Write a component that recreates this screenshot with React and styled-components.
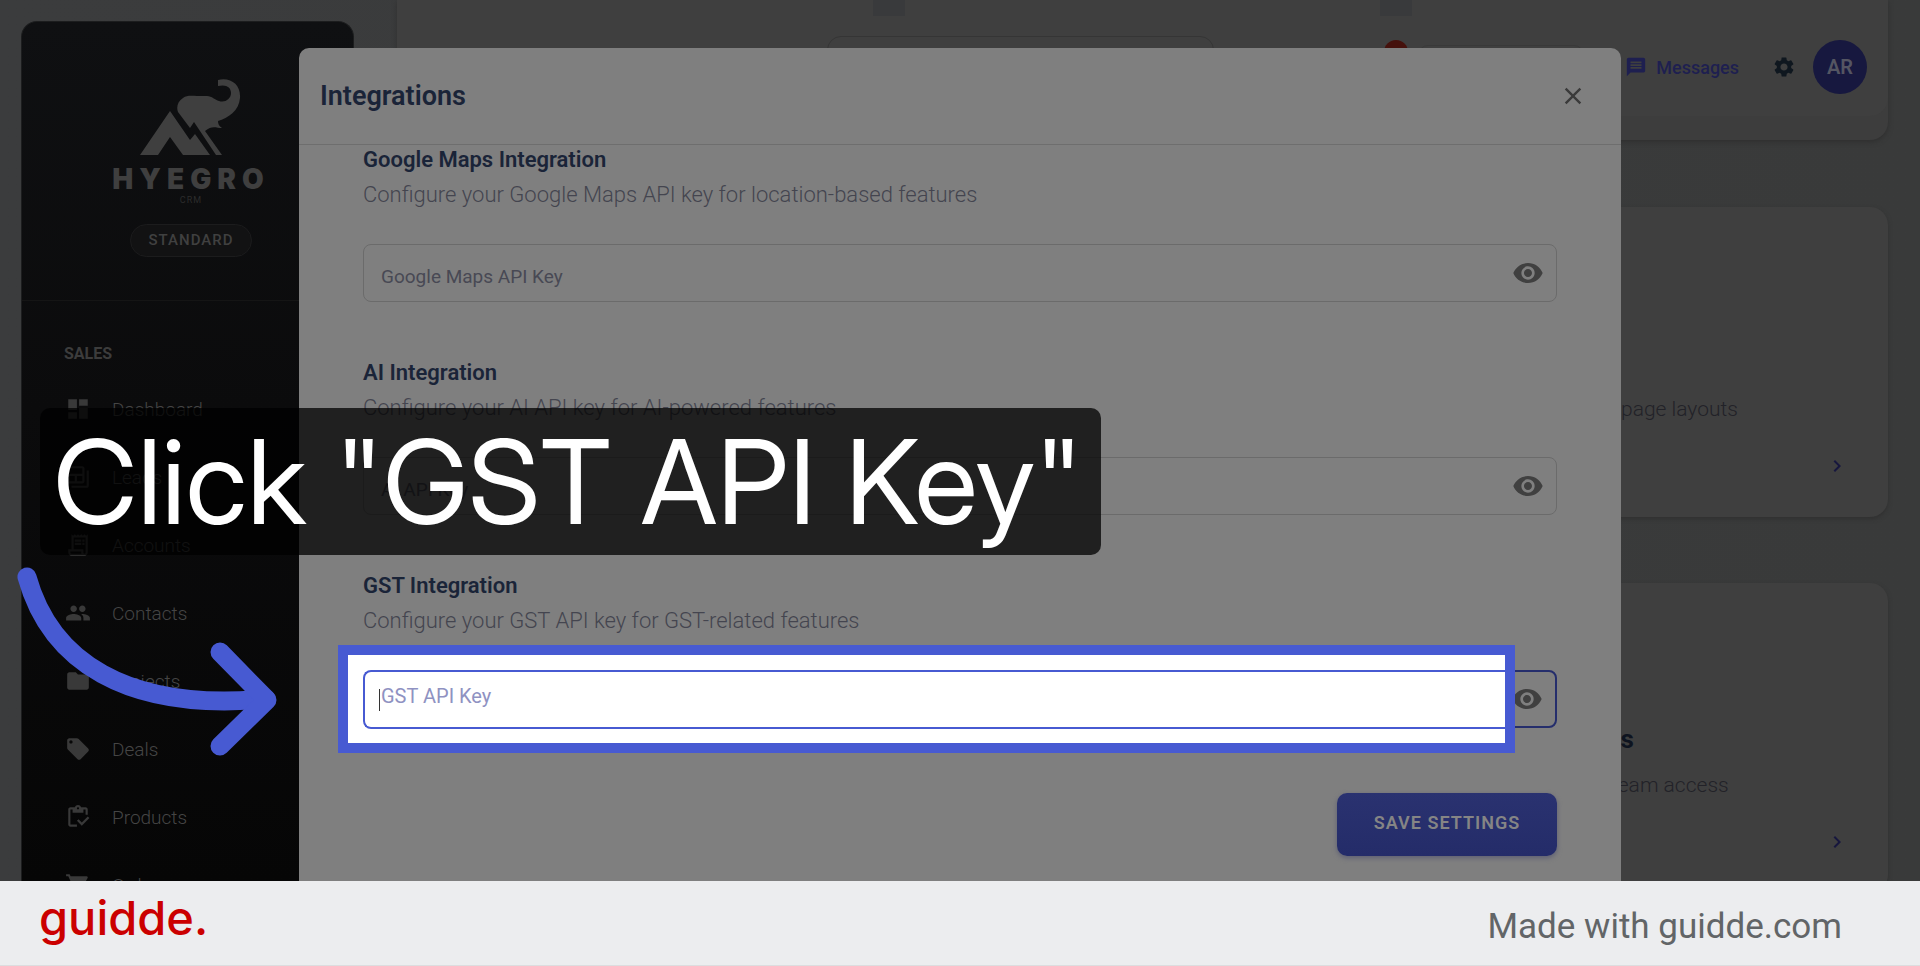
import styled, { createGlobalStyle } from "styled-components";
import { useState } from "react";
import {
  MdBackupTable,
  MdChevronRight,
  MdClose,
  MdDashboard,
  MdFolder,
  MdLocalOffer,
  MdMessage,
  MdOutlineInventory,
  MdOutlineReceiptLong,
  MdPeople,
  MdSettings,
  MdShoppingCart,
  MdVisibility,
} from "react-icons/md";

const GlobalStyle = createGlobalStyle`
  * {
    box-sizing: border-box;
  }
  body {
    margin: 0;
    font-family: Roboto, sans-serif;
    background: #393a3a;
  }
  button {
    font-family: inherit;
    border: none;
    padding: 0;
    background: none;
    cursor: pointer;
  }
`;

const Layout = styled.div`
  display: grid;
  grid-template-rows: minmax(0, 1fr) auto;
  height: 100vh;
  overflow: hidden;
`;

const Stage = styled.main`
  position: relative;
  display: grid;
  grid-template: minmax(0, 1fr) / minmax(0, 1fr);
  overflow: hidden;
`;

/* page behind the dialog */

const Page = styled.div`
  grid-area: 1 / 1;
  display: flex;
  gap: 43px;
  padding: 0 32px 0 21px;
  overflow: hidden;
  background: linear-gradient(90deg, #3b3c3d, #393a3a);
`;

const Sidebar = styled.aside`
  flex: 0 0 333px;
  margin-top: 21px;
  border-radius: 16px 16px 0 0;
  border: 1px solid #1c1d1e;
  border-bottom: none;
  background: linear-gradient(180deg, #0f1012, #0b0b0c 45%, #060606);
  overflow: hidden;
`;

const Brand = styled.div`
  display: flex;
  flex-direction: column;
  align-items: center;
  height: 279px;
  padding: 56px 0 0 7px;
  border-bottom: 1px solid #151515;
`;

const BrandName = styled.div`
  margin-top: 10px;
  font-family: Inter, sans-serif;
  font-size: 28px;
  font-weight: 900;
  line-height: 26px;
  letter-spacing: 6px;
  color: #3f3f3f;
`;

const BrandSub = styled.div`
  margin-top: 2px;
  font-size: 9px;
  line-height: 12px;
  letter-spacing: 1px;
  color: #2c2c2c;
`;

const Plan = styled.div`
  margin-top: 18px;
  padding: 0 18px;
  border: 1px solid #1c1c1d;
  border-radius: 17px;
  background: #121213;
  font-size: 15px;
  font-weight: 500;
  line-height: 31px;
  letter-spacing: 1px;
  color: #404040;
`;

const NavTitle = styled.h2`
  margin: 43px 0 11px 42px;
  font-size: 16px;
  font-weight: 700;
  line-height: 20px;
  color: #3c3c3c;
`;

const NavItem = styled.a`
  display: flex;
  align-items: center;
  gap: 21px;
  height: 68px;
  padding-left: 43px;
  font-size: 19px;
  font-weight: 300;
  text-decoration: none;
  color: #454545;

  svg {
    width: 26px;
    height: 26px;
    color: #393939;
  }
`;

const Content = styled.div`
  flex: 1;
  min-width: 0;
  display: flex;
  flex-direction: column;
`;

const TopPanel = styled.header`
  flex: none;
  height: 140px;
  border-radius: 0 0 18px 18px;
  background: #3d3d3d;
  box-shadow: 0 2px 5px #2f2f2f;
`;

const TabStrip = styled.div`
  display: flex;
  justify-content: flex-end;
  gap: 475px;
  height: 18px;
  padding-right: 476px;
  background: #3f3f3f;
`;

const Tab = styled.span`
  width: 32px;
  height: 16px;
  background: #393a3c;
`;

const Toolbar = styled.div`
  display: flex;
  align-items: center;
  justify-content: flex-end;
  height: 98px;
  padding-right: 21px;
  border-radius: 0 0 18px 18px;
  background: #3f3f3f;
`;

const Search = styled.input`
  width: 387px;
  height: 62px;
  margin-right: 148px;
  border: 1px solid #353535;
  border-radius: 14px;
  background: transparent;
`;

const Bell = styled.button`
  position: relative;
  width: 46px;
  height: 46px;
  margin-right: 10px;
`;

const BellBadge = styled.span`
  position: absolute;
  top: -4px;
  right: 0;
  width: 24px;
  height: 24px;
  border-radius: 50%;
  background: #45110c;
`;

const QuickBox = styled.div`
  width: 166px;
  height: 44px;
  margin-right: 41px;
  border: 1px solid #393939;
  border-radius: 10px;
`;

const MessagesLink = styled.a`
  display: flex;
  align-items: center;
  gap: 9px;
  margin-right: 33px;
  font-size: 18px;
  font-weight: 500;
  text-decoration: none;
  color: #1e1f50;

  svg {
    width: 22px;
    height: 22px;
  }
`;

const GearButton = styled.button`
  display: flex;
  margin-right: 17px;
  color: #0f171f;

  svg {
    width: 24px;
    height: 24px;
  }
`;

const Avatar = styled.button`
  width: 54px;
  height: 54px;
  border-radius: 50%;
  background: #17183f;
  font-size: 20px;
  font-weight: 600;
  color: #545562;
`;

const CardList = styled.section`
  display: flex;
  flex-direction: column;
  align-items: flex-end;
  gap: 66px;
  padding-top: 67px;
`;

const Card = styled.article`
  width: 475px;
  height: 310px;
  padding: 143px 39px 39px ${(props) => props.$inset};
  border-radius: 18px;
  background: #3f3f3f;
  box-shadow: 0 2px 4px #303030;
`;

const CardTitle = styled.h3`
  height: 26px;
  margin: 0 0 20px;
  font-size: 26px;
  font-weight: 700;
  line-height: 26px;
  color: #0e1420;
`;

const CardText = styled.p`
  margin: 0;
  font-size: 21px;
  font-weight: 300;
  line-height: 26px;
  color: #222228;
`;

const CardLink = styled.a`
  display: flex;
  justify-content: flex-end;
  margin-top: 32px;
  color: #17173e;
`;

/* integrations dialog */

const ModalLayer = styled.div`
  grid-area: 1 / 1;
  display: flex;
  justify-content: center;
  padding-top: 48px;
  z-index: 1;
`;

const Modal = styled.section`
  display: flex;
  flex-direction: column;
  width: 90%;
  max-width: 1322px;
  border-radius: 10px 10px 0 0;
  background: #7f7f7f;
`;

const ModalHeader = styled.div`
  display: flex;
  align-items: center;
  justify-content: space-between;
  height: 97px;
  padding: 0 34px 0 21px;
  border-bottom: 1px solid #6e6e6e;
`;

const ModalTitle = styled.h1`
  margin: 0;
  font-size: 27px;
  font-weight: 600;
  color: #1a2438;
`;

const CloseButton = styled.button`
  display: flex;
  color: #3a3a3a;

  svg {
    width: 28px;
    height: 28px;
  }
`;

const ModalBody = styled.form`
  display: flex;
  flex-direction: column;
  gap: 56px;
  padding: 0 64px;
`;

const SectionTitle = styled.h2`
  margin: 0;
  font-size: 22px;
  font-weight: 600;
  line-height: 29px;
  color: #1a2438;
`;

const SectionText = styled.p`
  margin: 8px 0 36px;
  font-size: 22px;
  font-weight: 300;
  line-height: 26px;
  color: #44454f;
`;

const Field = styled.div`
  position: relative;
  display: flex;
  align-items: center;
  height: 58px;
  padding-right: 12px;
  border: ${(props) => (props.$focused ? "2px solid #252e6c" : "1px solid #6b6b6b")};
  border-radius: 8px;
`;

const FieldInput = styled.input`
  flex: 1;
  min-width: 0;
  height: 100%;
  padding: 0 18px;
  border: none;
  outline: none;
  background: transparent;
  font-family: inherit;
  font-size: 19px;
`;

const FieldLabel = styled.label`
  position: absolute;
  left: ${(props) => (props.$focused ? "16px" : "17px")};
  top: ${(props) => (props.$focused ? "12px" : "20px")};
  font-size: ${(props) => (props.$focused ? "20px" : "19px")};
  line-height: 24px;
  color: ${(props) => (props.$focused ? "#8f92c2" : "#484954")};
  pointer-events: none;
`;

const EyeButton = styled.button`
  display: flex;
  margin-left: auto;
  color: #404040;

  svg {
    width: 32px;
    height: 32px;
  }
`;

const Spotlight = styled.div`
  position: absolute;
  top: -27px;
  right: 40px;
  bottom: -27px;
  left: -27px;
  padding: 15px 0 15px 15px;
  border: 10px solid #475ad2;
  background: #fff;
  overflow: hidden;
`;

const SpotField = styled.div`
  position: relative;
  display: flex;
  height: 59px;
  border: 2px solid #475ad2;
  border-right: none;
  border-radius: 8px 0 0 8px;
`;

const Caret = styled.span`
  position: absolute;
  top: 17px;
  left: 14px;
  width: 1px;
  height: 22px;
  background: #333;
`;

const Actions = styled.div`
  display: flex;
  justify-content: flex-end;
  padding-top: 9px;
`;

const SaveButton = styled.button`
  width: 220px;
  height: 63px;
  padding-bottom: 4px;
  border-radius: 10px;
  background: linear-gradient(180deg, #2a3270, #242c69);
  box-shadow: 0 2px 5px #5d5f74;
  font-size: 18px;
  font-weight: 600;
  letter-spacing: 1px;
  color: #858585;
`;

/* guide step drawn over everything */

const Caption = styled.p`
  position: absolute;
  top: 408px;
  left: 40px;
  z-index: 2;
  margin: 0;
  padding: 0 19px 0 13px;
  border-radius: 10px;
  background: rgba(0, 0, 0, 0.75);
  font-family: "Inter Display", Inter, sans-serif;
  font-size: 117px;
  font-variation-settings: "opsz" 32;
  line-height: 147px;
  white-space: nowrap;
  color: #fff;
`;

const Arrow = styled.svg`
  position: absolute;
  top: 560px;
  left: 10px;
  z-index: 3;
  width: 280px;
  height: 210px;
`;

const Footer = styled.footer`
  display: flex;
  align-items: center;
  justify-content: space-between;
  height: 85px;
  padding: 0 78px 0 39px;
  border-bottom: 1px solid #dcdddf;
  background: #ecedef;
`;

const Wordmark = styled.a`
  padding-bottom: 10px;
  font-family: Inter, sans-serif;
  font-size: 47px;
  font-weight: 500;
  line-height: 56px;
  text-decoration: none;
  color: #cb0000;
`;

const MadeWith = styled.span`
  padding-top: 8px;
  font-size: 35px;
  line-height: 44px;
  color: #626567;
`;

const navItems = [
  { label: "Dashboard", Icon: MdDashboard },
  { label: "Leads", Icon: MdBackupTable },
  { label: "Accounts", Icon: MdOutlineReceiptLong },
  { label: "Contacts", Icon: MdPeople },
  { label: "Projects", Icon: MdFolder },
  { label: "Deals", Icon: MdLocalOffer },
  { label: "Products", Icon: MdOutlineInventory },
  { label: "Orders", Icon: MdShoppingCart },
];

const integrations = [
  {
    id: "maps",
    title: "Google Maps Integration",
    text: "Configure your Google Maps API key for location-based features",
    label: "Google Maps API Key",
  },
  {
    id: "ai",
    title: "AI Integration",
    text: "Configure your AI API key for AI-powered features",
    label: "AI API Key",
  },
  {
    id: "gst",
    title: "GST Integration",
    text: "Configure your GST API key for GST-related features",
    label: "GST API Key",
    focused: true,
  },
];

const ElephantLogo = () => (
  <svg width="102" height="78" viewBox="141 78 102 78" fill="#3f3f3f">
    <path d="M141 155 L171 111 L191 140 L196 134 L211 155 L184 155 L171 137 L159 155 Z" />
    <path d="M191 128 L179 112 C177 107 179 101 184 98 C188 95 193 96 198 96 H208 C213 96 216 100 220 101 C226 103 232 99 232 93 C232 87 227 84 219 86 V80 C232 77 242 85 241 98 C240 111 229 118 219 121 C219 124 220 126 223 128 C217 128 213 125 206 131 L223 155 H217 L195 122 Z" />
  </svg>
);

const IntegrationSection = ({ item }) => {
  const [value, setValue] = useState("");
  const [shown, setShown] = useState(false);

  const input = (
    <>
      <FieldInput
        id={item.id}
        type={shown ? "text" : "password"}
        value={value}
        onChange={(e) => setValue(e.target.value)}
      />
      {value === "" && (
        <FieldLabel htmlFor={item.id} $focused={item.focused}>
          {item.label}
        </FieldLabel>
      )}
    </>
  );

  return (
    <section>
      <SectionTitle>{item.title}</SectionTitle>
      <SectionText>{item.text}</SectionText>
      <Field $focused={item.focused}>
        {!item.focused && input}
        <EyeButton type="button" aria-label="Show key" onClick={() => setShown(!shown)}>
          <MdVisibility />
        </EyeButton>
        {item.focused && (
          <Spotlight>
            <SpotField>
              {input}
              <Caret />
            </SpotField>
          </Spotlight>
        )}
      </Field>
    </section>
  );
};

const App = () => (
  <Layout>
    <GlobalStyle />
    <Stage>
      <Page>
        <Sidebar>
          <Brand>
            <ElephantLogo />
            <BrandName>HYEGRO</BrandName>
            <BrandSub>CRM</BrandSub>
            <Plan>STANDARD</Plan>
          </Brand>
          <nav>
            <NavTitle>SALES</NavTitle>
            {navItems.map(({ label, Icon }) => (
              <NavItem key={label} href="#">
                <Icon />
                {label}
              </NavItem>
            ))}
          </nav>
        </Sidebar>
        <Content>
          <TopPanel>
            <TabStrip>
              <Tab />
              <Tab />
            </TabStrip>
            <Toolbar>
              <Search aria-label="Search" />
              <Bell aria-label="Notifications">
                <BellBadge />
              </Bell>
              <QuickBox />
              <MessagesLink href="#">
                <MdMessage />
                Messages
              </MessagesLink>
              <GearButton aria-label="Settings">
                <MdSettings />
              </GearButton>
              <Avatar>AR</Avatar>
            </Toolbar>
          </TopPanel>
          <CardList>
            <Card $inset="208px">
              <CardTitle />
              <CardText>page layouts</CardText>
              <CardLink href="#" aria-label="Open layouts">
                <MdChevronRight size={24} />
              </CardLink>
            </Card>
            <Card $inset="198px">
              <CardTitle>rs</CardTitle>
              <CardText>team access</CardText>
              <CardLink href="#" aria-label="Open team">
                <MdChevronRight size={24} />
              </CardLink>
            </Card>
          </CardList>
        </Content>
      </Page>

      <ModalLayer>
        <Modal role="dialog" aria-labelledby="modal-title">
          <ModalHeader>
            <ModalTitle id="modal-title">Integrations</ModalTitle>
            <CloseButton aria-label="Close">
              <MdClose />
            </CloseButton>
          </ModalHeader>
          <ModalBody onSubmit={(e) => e.preventDefault()}>
            {integrations.map((item) => (
              <IntegrationSection key={item.id} item={item} />
            ))}
            <Actions>
              <SaveButton type="submit">SAVE SETTINGS</SaveButton>
            </Actions>
          </ModalBody>
        </Modal>
      </ModalLayer>

      <Caption>Click "GST API Key"</Caption>
      <Arrow
        viewBox="10 560 280 210"
        fill="none"
        stroke="#475ad2"
        strokeWidth="19"
        strokeLinecap="round"
        strokeLinejoin="round"
      >
        <path d="M27 577 C50 660 125 712 266 699" />
        <path d="M220 652 L267 700 L220 746" />
      </Arrow>
    </Stage>
    <Footer>
      <Wordmark href="#">guidde.</Wordmark>
      <MadeWith>Made with guidde.com</MadeWith>
    </Footer>
  </Layout>
);

export default App;
